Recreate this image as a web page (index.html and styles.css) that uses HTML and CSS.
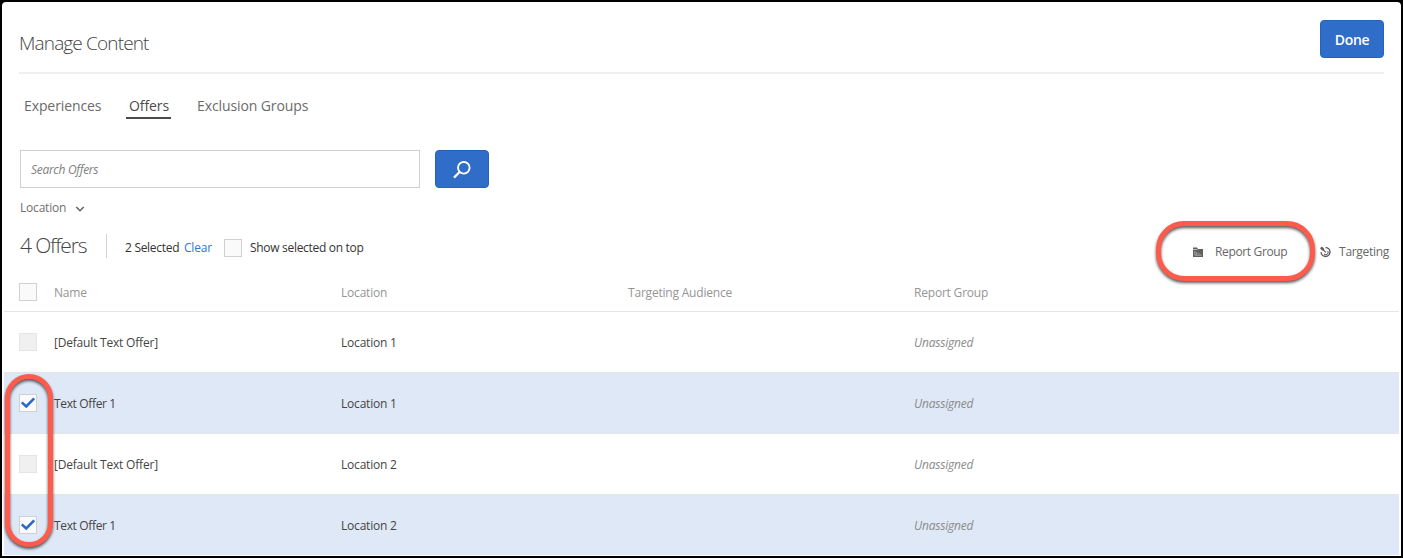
FILE: index.html
```html
<!DOCTYPE html>
<html lang="en">
<head>
<meta charset="utf-8">
<title>Manage Content</title>
<link rel="stylesheet" href="styles.css">
</head>
<body>
<main class="panel">
  <header class="header">
    <h1 class="title">Manage Content</h1>
    <button class="btn done">Done</button>
  </header>
  <nav class="tabs">
    <a class="tab experiences">Experiences</a>
    <a class="tab active">Offers</a>
    <a class="tab groups">Exclusion Groups</a>
  </nav>
  <div class="search">
    <div class="field"><span class="t-search">Search Offers</span></div>
    <button class="btn find" aria-label="Search">
      <svg width="20" height="20" viewBox="0 0 20 20" fill="none" stroke="#fff"><circle cx="11.8" cy="8.8" r="5.8" stroke-width="1.9"/><path d="M7.8 12.8L2 18.6" stroke-width="2.2"/></svg>
    </button>
  </div>
  <div class="filter">
    <span class="t-filter">Location</span>
    <svg width="10" height="8" viewBox="0 0 10 8" fill="none" stroke="#666" stroke-width="1.6"><path d="M1.3 3L5 6.7L8.7 3"/></svg>
  </div>
  <div class="toolbar">
    <h2 class="count">4 Offers</h2>
    <div class="selection">
      <span class="t-sel">2 Selected</span>
      <a class="clear">Clear</a>
      <span class="box"></span>
      <span class="t-show">Show selected on top</span>
    </div>
    <div class="actions">
      <div class="action report">
        <svg width="12" height="12" viewBox="0 0 12 12"><path fill="#606060" d="M1 1.4h4l1 1.5h5V11H1z"/><path d="M1 3.5h4.6" stroke="#ddd" stroke-width=".7"/><path d="M2.9 5v4.2h6.6M4.6 8.2V6.4M6.2 8.2V7.2M7.8 8.2V7.5" stroke="#ccc" stroke-width=".7" fill="none"/></svg>
        <span class="t-report">Report Group</span>
        <span class="ring ring-report"></span>
      </div>
      <div class="action target">
        <svg width="12" height="12" viewBox="0 0 12 12" fill="none" stroke="#606060"><path d="M6 1.2A4.8 4.8 0 1 1 1.2 6.2" stroke-width="1.6"/><path d="M8.2 5A2.3 2.3 0 0 1 4.4 8" stroke-width="1.1"/><path d="M2 2.2L6.4 6.4" stroke-width="1.4"/><path d="M0 2L1.8 0L4.5 2.2L4.3 4.4L2.2 4.3Z" fill="#606060" stroke="none"/></svg>
        <span class="t-target">Targeting</span>
      </div>
    </div>
  </div>
  <section class="table">
    <div class="row head">
      <span class="box"></span><span class="cell">Name</span><span class="cell">Location</span><span class="cell">Targeting Audience</span><span class="cell">Report Group</span>
    </div>
    <div class="row">
      <span class="box disabled"></span><span class="cell">[Default Text Offer]</span><span class="cell">Location 1</span><span></span><span class="cell unassigned">Unassigned</span>
    </div>
    <div class="row selected">
      <span class="box"><svg width="18" height="18" viewBox="0 0 18 18" fill="none" stroke="#2b68c8" stroke-width="2.6"><path d="M2.8 8.4L7.2 12.5L15.2 4.3"/></svg></span><span class="cell text-offer">Text Offer 1</span><span class="cell">Location 1</span><span></span><span class="cell unassigned">Unassigned</span>
    </div>
    <div class="row">
      <span class="box disabled"></span><span class="cell">[Default Text Offer]</span><span class="cell">Location 2</span><span></span><span class="cell unassigned">Unassigned</span>
    </div>
    <div class="row selected">
      <span class="box"><svg width="18" height="18" viewBox="0 0 18 18" fill="none" stroke="#2b68c8" stroke-width="2.6"><path d="M2.8 8.4L7.2 12.5L15.2 4.3"/></svg></span><span class="cell text-offer">Text Offer 1</span><span class="cell">Location 2</span><span></span><span class="cell unassigned">Unassigned</span>
    </div>
    <span class="ring ring-checks"></span>
  </section>
</main>
</body>
</html>
```

FILE: styles.css
```css
* { box-sizing: border-box; }
body {
  margin: 0;
  height: 558px;
  padding: 2px;
  overflow: hidden;
  background: #000;
  color: #444;
  font: 12px/18px "Open Sans", "Noto Sans", sans-serif;
  letter-spacing: -.2px;
  white-space: nowrap;
}
.panel {
  height: 554px;
  overflow: hidden;
  background: #fff;
  border-radius: 4px 4px 0 0;
}
.header {
  display: flex;
  justify-content: space-between;
  height: 72px;
  margin: 0 17px;
  border-bottom: 2px solid #efefef;
}
.title { margin: 26px 0 0; font-size: 19px; line-height: 30px; font-weight: 300; letter-spacing: -.85px; }
.btn {
  display: flex;
  align-items: center;
  justify-content: center;
  height: 38px;
  padding: 0;
  border: 1px solid #2362bd;
  border-radius: 4px;
  background: #2f6dc9;
  color: #fff;
}
.done { width: 64px; margin-top: 18px; font: 600 14px "Open Sans", sans-serif; letter-spacing: -.3px; }
.tabs {
  display: flex;
  gap: 25px;
  height: 76px;
  padding: 20px 0 0 22px;
  font-size: 14px;
  line-height: 24px;
  letter-spacing: -.1px;
  color: #6b6b6b;
}
.experiences { width: 77px; }
.tab { height: 25px; }
.active {
  width: 45px;
  padding-left: 3px;
  border-bottom: 2px solid #4b4b4b;
  color: #4b4b4b;
  font-weight: 500;
}
.groups { padding-left: 1px; }
.search { display: flex; gap: 15px; padding-left: 18px; }
.field {
  width: 400px;
  height: 38px;
  padding: 10px;
  border: 1px solid #d0d0d0;
  color: #808080;
  font-style: italic;
  letter-spacing: -.3px;
}
.find { width: 54px; }
.filter {
  display: flex;
  align-items: center;
  height: 20px;
  margin: 10px 0 0 18px;
  color: #707070;
}
.t-filter { width: 55px; }
.toolbar { display: flex; height: 55px; padding: 14px 12px 0 18px; }
.count {
  width: 87px;
  height: 24px;
  margin: 2px 0 0;
  border-right: 1px solid #d3d3d3;
  font-size: 21px;
  line-height: 22px;
  font-weight: 300;
  letter-spacing: -1.15px;
}
.selection { display: flex; align-items: center; height: 18px; margin: 7px 0 0 18px; color: #333; }
.t-sel { width: 59px; letter-spacing: -.3px; }
.clear { width: 40px; color: #2f76d2; }
.selection .box { margin-right: 8px; }
.t-show { letter-spacing: -.3px; }
.box { display: block; width: 18px; height: 18px; border: 1px solid #d0d0d0; background: #fafafa; }
.box svg { display: block; margin: -1px; }
.disabled { border-color: #e5e5e5; background: #f0f0f0; }
.actions { display: flex; height: 18px; margin: 11px 0 0 auto; color: #666; }
.action { position: relative; display: flex; align-items: center; gap: 11px; }
.report { width: 128px; letter-spacing: -.35px; }
.target { width: 69px; gap: 8px; letter-spacing: -.3px; }
.ring {
  position: absolute;
  border: 5px solid #ff5b4d;
  filter: drop-shadow(0 2px 1.5px rgba(0, 0, 0, .65));
}
.ring-report { left: -36px; top: -22px; width: 159px; height: 60px; border-radius: 28px; }
.table { position: relative; margin: 0 2px; }
.row {
  display: grid;
  grid-template-columns: 35px 287px 287px 286px 1fr;
  align-items: center;
  height: 61px;
  padding: 0 0 0 15px;
  border-top: 1px solid #e5e5e5;
}
.head { height: 38px; border: 0; color: #959595; }
.selected { background: #dfe8f6; }
.cell { padding-top: 2px; }
.text-offer { letter-spacing: -.35px; }
.unassigned { color: #8b8b8b; font-style: italic; }
.ring-checks { left: 1px; top: 101px; width: 48px; height: 173px; border-radius: 24px; }
```
